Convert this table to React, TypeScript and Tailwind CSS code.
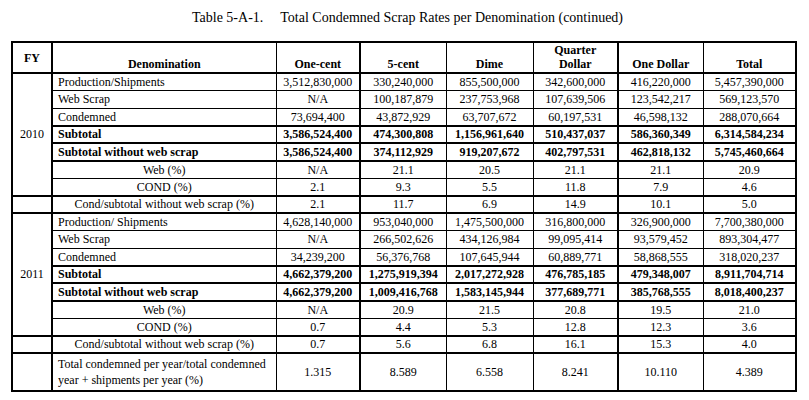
const heads = ['One-cent', '5-cent', 'Dime', 'Quarter Dollar', 'One Dollar', 'Total'];

type Row = { label: string; vals: string[]; kind: 'left' | 'bold' | 'center'; thick?: boolean };

const y2010: Row[] = [
  { label: 'Production/Shipments', kind: 'left', vals: ['3,512,830,000', '330,240,000', '855,500,000', '342,600,000', '416,220,000', '5,457,390,000'] },
  { label: 'Web Scrap', kind: 'left', vals: ['N/A', '100,187,879', '237,753,968', '107,639,506', '123,542,217', '569,123,570'] },
  { label: 'Condemned', kind: 'left', vals: ['73,694,400', '43,872,929', '63,707,672', '60,197,531', '46,598,132', '288,070,664'] },
  { label: 'Subtotal', kind: 'bold', thick: true, vals: ['3,586,524,400', '474,300,808', '1,156,961,640', '510,437,037', '586,360,349', '6,314,584,234'] },
  { label: 'Subtotal without web scrap', kind: 'bold', thick: true, vals: ['3,586,524,400', '374,112,929', '919,207,672', '402,797,531', '462,818,132', '5,745,460,664'] },
  { label: 'Web (%)', kind: 'center', thick: true, vals: ['N/A', '21.1', '20.5', '21.1', '21.1', '20.9'] },
  { label: 'COND (%)', kind: 'center', vals: ['2.1', '9.3', '5.5', '11.8', '7.9', '4.6'] },
];

const y2011: Row[] = [
  { label: 'Production/ Shipments', kind: 'left', vals: ['4,628,140,000', '953,040,000', '1,475,500,000', '316,800,000', '326,900,000', '7,700,380,000'] },
  { label: 'Web Scrap', kind: 'left', vals: ['N/A', '266,502,626', '434,126,984', '99,095,414', '93,579,452', '893,304,477'] },
  { label: 'Condemned', kind: 'left', vals: ['34,239,200', '56,376,768', '107,645,944', '60,889,771', '58,868,555', '318,020,237'] },
  { label: 'Subtotal', kind: 'bold', thick: true, vals: ['4,662,379,200', '1,275,919,394', '2,017,272,928', '476,785,185', '479,348,007', '8,911,704,714'] },
  { label: 'Subtotal without web scrap', kind: 'bold', thick: true, vals: ['4,662,379,200', '1,009,416,768', '1,583,145,944', '377,689,771', '385,768,555', '8,018,400,237'] },
  { label: 'Web (%)', kind: 'center', thick: true, vals: ['N/A', '20.9', '21.5', '20.8', '19.5', '21.0'] },
  { label: 'COND (%)', kind: 'center', vals: ['0.7', '4.4', '5.3', '12.8', '12.3', '3.6'] },
];

const serif = "[font-family:'Liberation_Serif','Times_New_Roman',serif]";
const cell = `${serif} border border-black text-center p-0`;

// heavier vertical rules after One-cent, Quarter Dollar and Total
const thickRight = (i: number) => (i === 0 || i === 3 || i === 5 ? 'border-r-2' : '');

function valCells(vals: string[], bold: boolean, thick?: boolean) {
  return vals.map((v, i) => (
    <td key={i} className={`${cell} ${bold ? 'font-bold' : ''} ${thick ? 'border-t-2' : ''} ${thickRight(i)}`}>
      {v}
    </td>
  ));
}

function Block({ year, rows, cond }: { year: string; rows: Row[]; cond: string[] }) {
  return (
    <>
      {rows.map((r, i) => (
        <tr key={r.label} className="h-[17.5px]">
          {i === 0 && (
            <td rowSpan={rows.length} className={`${serif} border-2 border-black text-center align-middle p-0`}>
              {year}
            </td>
          )}
          <td
            className={`${serif} border border-black py-0 ${r.thick || i === 0 ? 'border-t-2' : ''} ${
              r.kind === 'center' ? 'text-center px-0' : 'text-left pl-[5px] pr-0'
            } ${r.kind === 'bold' ? 'font-bold' : ''}`}
          >
            {r.label}
          </td>
          {valCells(r.vals, r.kind === 'bold', r.thick || i === 0)}
        </tr>
      ))}
      <tr className="h-[17.5px]">
        <td className={`${serif} border-2 border-black p-0`}></td>
        <td className={`${serif} border border-black border-t-2 border-b-2 text-center p-0`}>
          Cond/subtotal without web scrap (%)
        </td>
        {cond.map((v, i) => (
          <td key={i} className={`${cell} border-t-2 border-b-2 ${thickRight(i)}`}>
            {v}
          </td>
        ))}
      </tr>
    </>
  );
}

export default function App() {
  return (
    <div className={`w-[809px] h-[400px] bg-white text-black overflow-hidden ${serif}`}>
      <div className="pt-[10px] h-[41px] text-center text-[14px] leading-[16px] pl-[6px]">
        Table 5-A-1.<span className="inline-block w-[17px]"></span>Total Condemned Scrap Rates per Denomination (continued)
      </div>
      <table className={`${serif} ml-[11px] w-[784px] table-fixed border-collapse border-2 border-black text-[12px] leading-[14px]`}>
        <colgroup>
          <col className="w-[40px]" />
          <col className="w-[224px]" />
          <col className="w-[84px]" />
          <col className="w-[86px]" />
          <col className="w-[87px]" />
          <col className="w-[85px]" />
          <col className="w-[85px]" />
          <col className="w-[93px]" />
        </colgroup>
        <tbody>
          <tr className="h-[28px]">
            <td className={`${serif} font-bold border-2 border-black text-center align-middle p-0`}>FY</td>
            <td className={`${serif} font-bold border border-black border-b-2 text-center align-bottom p-0 pb-[1px]`}>
              Denomination
            </td>
            {heads.map((h, i) => (
              <td
                key={h}
                className={`${serif} font-bold border border-black border-b-2 text-center align-bottom p-0 pb-[1px] ${thickRight(i)}`}
              >
                {h === 'Quarter Dollar' ? (
                  <>
                    Quarter
                    <br />
                    Dollar
                  </>
                ) : (
                  h
                )}
              </td>
            ))}
          </tr>
          <Block year="2010" rows={y2010} cond={['2.1', '11.7', '6.9', '14.9', '10.1', '5.0']} />
          <Block year="2011" rows={y2011} cond={['0.7', '5.6', '6.8', '16.1', '15.3', '4.0']} />
          <tr className="h-[38px]">
            <td className={`${serif} border-2 border-black p-0`}></td>
            <td className={`${serif} border border-black text-left pl-[5px] pr-0 py-0 align-middle leading-[16px]`}>
              Total condemned per year/total condemned
              <br />
              year + shipments per year (%)
            </td>
            {['1.315', '8.589', '6.558', '8.241', '10.110', '4.389'].map((v, i) => (
              <td key={i} className={`${cell} ${thickRight(i)}`}>
                {v}
              </td>
            ))}
          </tr>
        </tbody>
      </table>
    </div>
  );
}
